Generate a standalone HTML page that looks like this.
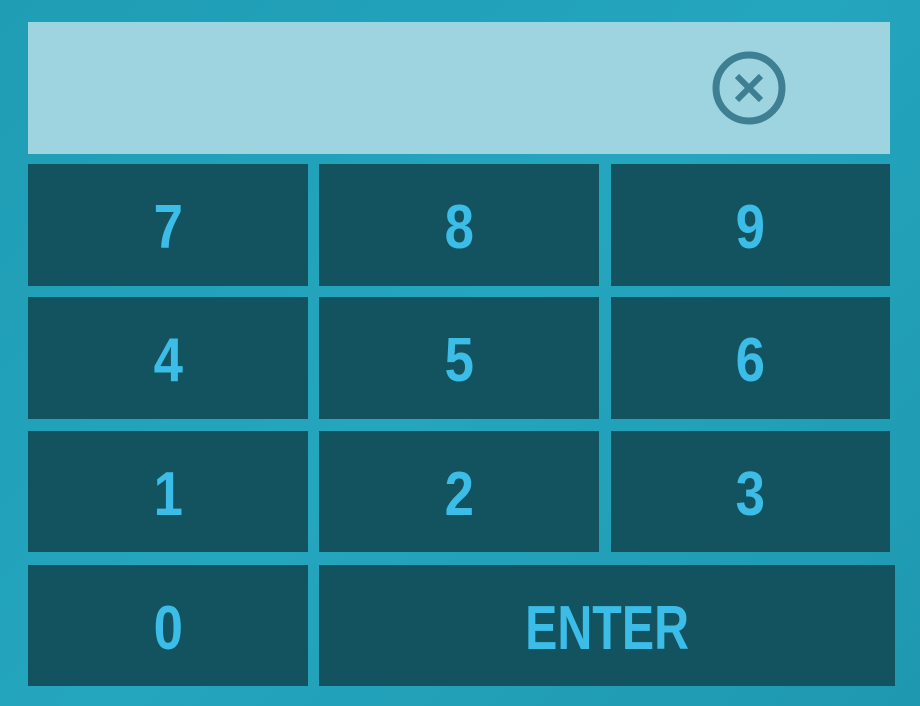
<!DOCTYPE html>
<html><head><meta charset="utf-8"><style>
html,body{margin:0;padding:0}
body{width:920px;height:706px;background:linear-gradient(135deg,#1f9db5,#24a6be 50%,#1e98b0);position:relative;overflow:hidden;font-family:"Liberation Sans",sans-serif}
.disp{position:absolute;left:28px;top:22px;width:862px;height:132px;background:#9dd4df}
.k{position:absolute;background:#13535f;color:#3bbde8;font-size:62px;font-weight:bold;display:flex;align-items:center;justify-content:center;line-height:1}
.k span{display:inline-block;transform:scaleX(0.85);margin-top:6px}
svg{position:absolute;left:710px;top:50px}
</style></head><body>
<div class="disp"></div>
<svg width="78" height="78" viewBox="0 0 78 78"><circle cx="39" cy="38" r="33" fill="none" stroke="#3e7f93" stroke-width="7"/><path d="M27 26 L51 50 M51 26 L27 50" stroke="#3e7f93" stroke-width="6"/></svg>
<div class="k" style="left:28px;top:164px;width:280px;height:122px"><span>7</span></div>
<div class="k" style="left:319px;top:164px;width:280px;height:122px"><span>8</span></div>
<div class="k" style="left:611px;top:164px;width:279px;height:122px"><span>9</span></div>
<div class="k" style="left:28px;top:297px;width:280px;height:122px"><span>4</span></div>
<div class="k" style="left:319px;top:297px;width:280px;height:122px"><span>5</span></div>
<div class="k" style="left:611px;top:297px;width:279px;height:122px"><span>6</span></div>
<div class="k" style="left:28px;top:431px;width:280px;height:121px"><span>1</span></div>
<div class="k" style="left:319px;top:431px;width:280px;height:121px"><span>2</span></div>
<div class="k" style="left:611px;top:431px;width:279px;height:121px"><span>3</span></div>
<div class="k" style="left:28px;top:565px;width:280px;height:121px"><span>0</span></div>
<div class="k" style="left:319px;top:565px;width:576px;height:121px"><span style="transform:scaleX(0.78)">ENTER</span></div>
</body></html>
